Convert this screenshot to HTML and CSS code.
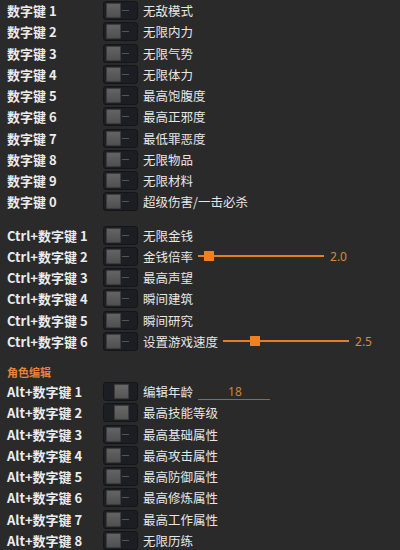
FILE: index.html
```html
<!DOCTYPE html>
<html>
<head>
<meta charset="utf-8">
<link rel="stylesheet" href="styles.css">
</head>
<body>
<div class="panel">
  <div class="group">
    <div class="row"><span class="key">数字键 1</span><span class="tg"><span class="knob"></span><span class="dash"></span></span><span class="name">无敌模式</span></div>
    <div class="row"><span class="key">数字键 2</span><span class="tg"><span class="knob"></span><span class="dash"></span></span><span class="name">无限内力</span></div>
    <div class="row"><span class="key">数字键 3</span><span class="tg"><span class="knob"></span><span class="dash"></span></span><span class="name">无限气势</span></div>
    <div class="row"><span class="key">数字键 4</span><span class="tg"><span class="knob"></span><span class="dash"></span></span><span class="name">无限体力</span></div>
    <div class="row"><span class="key">数字键 5</span><span class="tg"><span class="knob"></span><span class="dash"></span></span><span class="name">最高饱腹度</span></div>
    <div class="row"><span class="key">数字键 6</span><span class="tg"><span class="knob"></span><span class="dash"></span></span><span class="name">最高正邪度</span></div>
    <div class="row"><span class="key">数字键 7</span><span class="tg"><span class="knob"></span><span class="dash"></span></span><span class="name">最低罪恶度</span></div>
    <div class="row"><span class="key">数字键 8</span><span class="tg"><span class="knob"></span><span class="dash"></span></span><span class="name">无限物品</span></div>
    <div class="row"><span class="key">数字键 9</span><span class="tg"><span class="knob"></span><span class="dash"></span></span><span class="name">无限材料</span></div>
    <div class="row"><span class="key">数字键 0</span><span class="tg"><span class="knob"></span><span class="dash"></span></span><span class="name">超级伤害/一击必杀</span></div>
  </div>
  <div class="group gap">
    <div class="row"><span class="key">Ctrl+数字键 1</span><span class="tg"><span class="knob"></span><span class="dash"></span></span><span class="name">无限金钱</span></div>
    <div class="row"><span class="key">Ctrl+数字键 2</span><span class="tg"><span class="knob"></span><span class="dash"></span></span><span class="name">金钱倍率</span>
      <span class="slider"><span class="sknob" style="left:6px"></span></span><span class="val">2.0</span></div>
    <div class="row"><span class="key">Ctrl+数字键 3</span><span class="tg"><span class="knob"></span><span class="dash"></span></span><span class="name">最高声望</span></div>
    <div class="row"><span class="key">Ctrl+数字键 4</span><span class="tg"><span class="knob"></span><span class="dash"></span></span><span class="name">瞬间建筑</span></div>
    <div class="row"><span class="key">Ctrl+数字键 5</span><span class="tg"><span class="knob"></span><span class="dash"></span></span><span class="name">瞬间研究</span></div>
    <div class="row"><span class="key">Ctrl+数字键 6</span><span class="tg"><span class="knob"></span><span class="dash"></span></span><span class="name">设置游戏速度</span>
      <span class="slider"><span class="sknob" style="left:27px"></span></span><span class="val">2.5</span></div>
  </div>
  <div class="section">角色编辑</div>
  <div class="group">
    <div class="row"><span class="key">Alt+数字键 1</span><span class="tg on"><span class="knob"></span></span><span class="name">编辑年龄</span><span class="input">18</span></div>
    <div class="row"><span class="key">Alt+数字键 2</span><span class="tg on"><span class="knob"></span></span><span class="name">最高技能等级</span></div>
    <div class="row"><span class="key">Alt+数字键 3</span><span class="tg"><span class="knob"></span><span class="dash"></span></span><span class="name">最高基础属性</span></div>
    <div class="row"><span class="key">Alt+数字键 4</span><span class="tg"><span class="knob"></span><span class="dash"></span></span><span class="name">最高攻击属性</span></div>
    <div class="row"><span class="key">Alt+数字键 5</span><span class="tg"><span class="knob"></span><span class="dash"></span></span><span class="name">最高防御属性</span></div>
    <div class="row"><span class="key">Alt+数字键 6</span><span class="tg"><span class="knob"></span><span class="dash"></span></span><span class="name">最高修炼属性</span></div>
    <div class="row"><span class="key">Alt+数字键 7</span><span class="tg"><span class="knob"></span><span class="dash"></span></span><span class="name">最高工作属性</span></div>
    <div class="row"><span class="key">Alt+数字键 8</span><span class="tg"><span class="knob"></span><span class="dash"></span></span><span class="name">无限历练</span></div>
  </div>
</div>
</body>
</html>
```
FILE: styles.css
```css
html, body {
  margin: 0;
  padding: 0;
  background: #2a2a2a;
  height: 100%;
  overflow: hidden;
}
.panel {
  padding: 0 0 0 7px;
  font-family: "Noto Sans CJK SC", "Noto Sans", sans-serif;
  font-size: 13px;
  color: #e4e4e4;
}
.group.gap {
  margin-top: 12px;
}
.row {
  display: flex;
  align-items: center;
  height: 21.25px;
}
.key {
  width: 96px;
  font-weight: bold;
  white-space: nowrap;
  color: #ececec;
}
.tg {
  position: relative;
  box-sizing: border-box;
  width: 35px;
  height: 19px;
  border: 1px solid #141518;
  border-radius: 3px;
  background: #1c1e23;
  display: flex;
  align-items: center;
  padding-left: 2px;
  flex-shrink: 0;
}
.tg.on {
  padding-left: 10px;
}
.knob {
  width: 15px;
  height: 15px;
  border-radius: 2px;
  background: linear-gradient(#656565, #4e4e4e);
  box-shadow: inset 0 0 0 1px #3c3c3c;
}
.tg.on .knob {
  background: linear-gradient(#6a6a6a, #545454);
}
.dash {
  width: 7px;
  height: 1px;
  background: #555;
  margin-left: 1px;
}
.name {
  margin-left: 5px;
  white-space: nowrap;
  font-size: 12.5px;
  color: #e6e6e6;
}
.slider {
  position: relative;
  width: 126px;
  height: 2px;
  background: #e87d1e;
  margin-left: 5px;
}
.sknob {
  position: absolute;
  top: -4px;
  width: 10px;
  height: 10px;
  background: #f08020;
}
.val {
  margin-left: 6px;
  color: #d48a40;
  font-family: "Noto Sans", sans-serif;
  font-size: 12px;
}
.input {
  margin-left: 5px;
  width: 72px;
  box-sizing: border-box;
  padding-left: 30px;
  border-bottom: 1px solid #a8632a;
  color: #d08436;
  font-family: "Noto Sans", sans-serif;
  font-size: 12px;
  line-height: 14px;
  margin-top: 2px;
}
.section {
  margin-top: 12px;
  height: 17px;
  line-height: 17px;
  font-size: 11px;
  font-weight: bold;
  color: #e8823a;
}
```
